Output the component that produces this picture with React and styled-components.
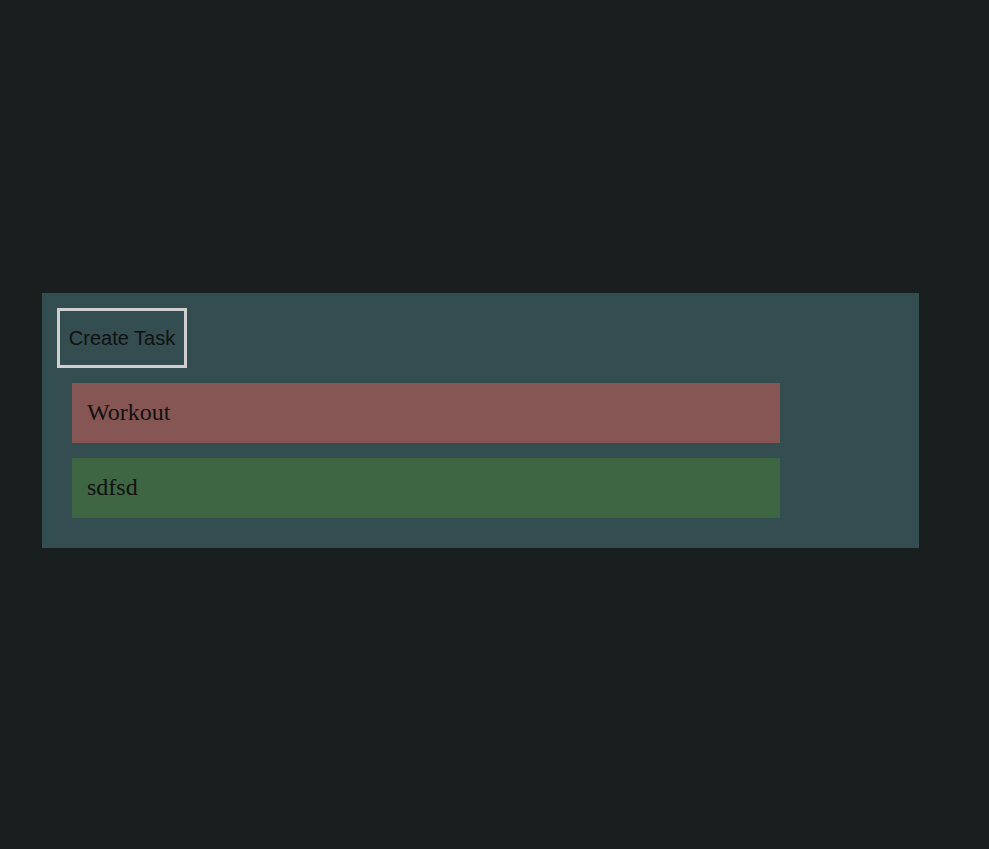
import styled, { createGlobalStyle } from "styled-components"

const Global = createGlobalStyle`
  html, body {
    margin: 0;
    padding: 0;
    background-color: #191e1e;
    min-height: 100%;
  }
`

function App(){

    const tasks = [
        { label: "Workout", color: "#855653" },
        { label: "sdfsd", color: "#3e6643" }
    ]

    return (
        <Page>
            <Global />
            <Board>
                <CreateButton>Create Task</CreateButton>
                <List>
                    {tasks.map((t, index) => (
                        <Task key={index} $color={t.color}>{t.label}</Task>
                    ))}
                </List>
            </Board>
        </Page>
    )
}

export default App;

const Page = styled.div`
padding: 293px 70px 0 42px;
min-height: 849px;
box-sizing: border-box;
background-color: #191e1e;
`

const Board = styled.section`
background-color: #334d50;
padding: 15px 15px 30px 15px;
display: flex;
flex-direction: column;
align-items: flex-start;
gap: 15px;
`

const CreateButton = styled.button`
height: 60px;
width: 130px;
box-sizing: border-box;
background: transparent;
border: 3px solid #cfcfcf;
color: #111;
font-family: "Liberation Sans", Arial, sans-serif;
font-size: 20px;
white-space: nowrap;
padding: 0;
cursor: pointer;
`

const List = styled.div`
display: flex;
flex-direction: column;
gap: 15px;
padding-left: 15px;
width: 708px;
`

const Task = styled.div`
height: 60px;
display: flex;
align-items: center;
padding: 0 15px 2px;
box-sizing: border-box;
background-color: ${p => p.$color};
color: #111;
font-family: "Liberation Serif", "Times New Roman", serif;
font-size: 24px;
`
